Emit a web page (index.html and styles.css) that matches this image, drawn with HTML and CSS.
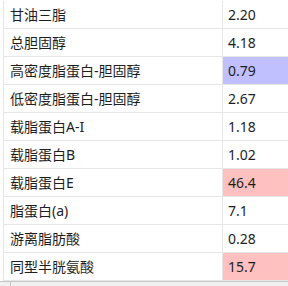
FILE: index.html
```html
<!DOCTYPE html>
<html>
<head>
<meta charset="utf-8">
<link rel="stylesheet" href="styles.css">
</head>
<body>
<div class="view">
  <div class="table">
    <div class="row"><div class="name">甘油三脂</div><div class="val">2.20</div></div>
    <div class="row"><div class="name">总胆固醇</div><div class="val">4.18</div></div>
    <div class="row"><div class="name">高密度脂蛋白-胆固醇</div><div class="val low">0.79</div></div>
    <div class="row"><div class="name">低密度脂蛋白-胆固醇</div><div class="val">2.67</div></div>
    <div class="row"><div class="name">载脂蛋白A-I</div><div class="val">1.18</div></div>
    <div class="row"><div class="name">载脂蛋白B</div><div class="val">1.02</div></div>
    <div class="row"><div class="name">载脂蛋白E</div><div class="val high">46.4</div></div>
    <div class="row"><div class="name">脂蛋白(a)</div><div class="val">7.1</div></div>
    <div class="row"><div class="name">游离脂肪酸</div><div class="val">0.28</div></div>
    <div class="row"><div class="name">同型半胱氨酸</div><div class="val high">15.7</div></div>
  </div>
  <div class="hscroll"><div class="thumb"></div></div>
</div>
</body>
</html>
```
FILE: styles.css
```css
html, body {
  margin: 0;
  padding: 0;
  background: #ffffff;
}
.view {
  width: 288px;
  height: 286px;
  overflow: hidden;
  display: flex;
  flex-direction: column;
}
.table {
  padding-top: 1px;
  padding-left: 3px;
  display: flex;
  flex-direction: column;
}
.row {
  display: grid;
  grid-template-columns: 219px 80px;
  height: 28px;
  box-sizing: border-box;
  border-bottom: 1px solid #e6e6e6;
  border-left: 1px solid #e6e6e6;
}
.name, .val {
  font-family: "Noto Sans", "Noto Sans CJK SC", sans-serif;
  font-size: 14px;
  color: #1e1e1e;
  line-height: 27px;
  white-space: nowrap;
}
.name {
  padding-left: 6px;
  border-right: 1px solid #e6e6e6;
}
.val {
  padding-left: 5px;
}
.low {
  background: #c0c0ff;
}
.high {
  background: #ffc0c0;
}
.hscroll {
  height: 5px;
  border-top: 1px solid #c8c8c8;
  background: #f0f0f0;
  display: flex;
}
.thumb {
  width: 10px;
  border-right: 1px solid #c8c8c8;
}
```
